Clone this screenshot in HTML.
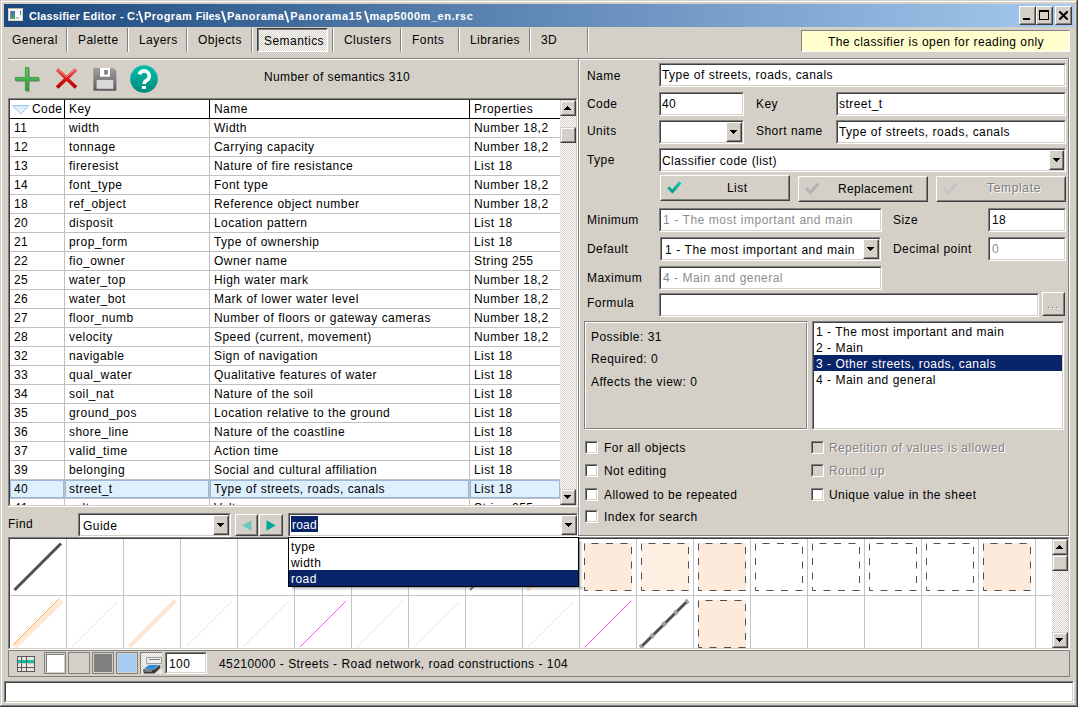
<!DOCTYPE html><html><head><meta charset="utf-8"><style>
html,body{margin:0;padding:0;}
body{width:1078px;height:707px;position:relative;overflow:hidden;background:#d4d0c8;font-family:"Liberation Sans",sans-serif;font-size:12px;}
div{position:absolute;box-sizing:border-box;}
.t{white-space:pre;line-height:14px;font-size:12px;word-spacing:0.2px;}
.ed{border:1px solid;border-color:#808080 #fff #fff #808080;}
.ed::before{content:"";position:absolute;left:0;top:0;right:0;bottom:0;border:1px solid;border-color:#404040 #d4d0c8 #d4d0c8 #404040;}
.bt{border:1px solid;border-color:#fff #404040 #404040 #fff;background:#d4d0c8;}
.bt::before{content:"";position:absolute;left:0;top:0;right:0;bottom:0;border:1px solid;border-color:#d4d0c8 #808080 #808080 #d4d0c8;}
.sb{border:1px solid;border-color:#d4d0c8 #404040 #404040 #d4d0c8;background:#d4d0c8;}
.sb::before{content:"";position:absolute;left:0;top:0;right:0;bottom:0;border:1px solid;border-color:#fff #808080 #808080 #fff;}
.cb{border:1px solid;border-color:#fff #404040 #404040 #fff;background:#d4d0c8;}
.cb::before{content:"";position:absolute;left:0;top:0;right:0;bottom:0;border:1px solid;border-color:#d4d0c8 #808080 #808080 #d4d0c8;}
.et{border:1px solid;border-color:#808080 #fff #fff #808080;}
.et::before{content:"";position:absolute;left:0;top:0;right:0;bottom:0;border:1px solid;border-color:#fff #808080 #808080 #fff;}
.dith{background-color:#d4d0c8;background-image:conic-gradient(#fff 25%,transparent 0 50%,#fff 0 75%,transparent 0);background-size:2px 2px;}
</style></head><body>
<div style="position:absolute;left:0px;top:0px;width:1078px;height:1px;background:#d4d0c8"></div>
<div style="position:absolute;left:0px;top:0px;width:1px;height:707px;background:#d4d0c8"></div>
<div style="position:absolute;left:1px;top:1px;width:1076px;height:1px;background:#fff"></div>
<div style="position:absolute;left:1px;top:1px;width:1px;height:705px;background:#fff"></div>
<div style="position:absolute;left:1077px;top:0px;width:1px;height:707px;background:#404040"></div>
<div style="position:absolute;left:0px;top:706px;width:1078px;height:1px;background:#404040"></div>
<div style="position:absolute;left:1076px;top:1px;width:1px;height:705px;background:#808080"></div>
<div style="position:absolute;left:1px;top:705px;width:1076px;height:1px;background:#808080"></div>
<div style="position:absolute;left:4px;top:4px;width:1070px;height:23px;background:linear-gradient(to right,#1c487d,#a6caf0)"></div>
<div style="position:absolute;left:8px;top:8px;width:15px;height:13px;background:#fafafa;border:1px solid #d8d4cc;border-top-color:#b8b4ac"></div>
<div style="position:absolute;left:10px;top:11px;width:5px;height:8px;background:linear-gradient(#3f6fb0,#45b050);border-left:1px solid #8080c0"></div>
<div style="position:absolute;left:20px;top:11px;width:1px;height:2px;background:#3060c0"></div>
<div style="position:absolute;left:20px;top:13px;width:1px;height:2px;background:#40b040"></div>
<div style="position:absolute;left:16px;top:17px;width:3px;height:2px;background:#c4c4c4"></div>
<div class="t" style="left:29px;top:9px;color:#fff;letter-spacing:0.144px;font-size:11px;font-weight:bold;">Classifier</div>
<div class="t" style="left:83px;top:9px;color:#fff;letter-spacing:0.253px;font-size:11px;font-weight:bold;">Editor</div>
<div class="t" style="left:120px;top:9px;color:#fff;letter-spacing:0.200px;font-size:11px;font-weight:bold;">-</div>
<div class="t" style="left:127px;top:9px;color:#fff;letter-spacing:0.200px;font-size:11px;font-weight:bold;">C:</div>
<div class="t" style="left:144px;top:9px;color:#fff;letter-spacing:0.436px;font-size:11px;font-weight:bold;">Program</div>
<div class="t" style="left:195.7px;top:9px;color:#fff;letter-spacing:-0.019px;font-size:11px;font-weight:bold;">Files</div>
<div class="t" style="left:227px;top:9px;color:#fff;letter-spacing:0.510px;font-size:11px;font-weight:bold;">Panorama</div>
<div class="t" style="left:290.3px;top:9px;color:#fff;letter-spacing:0.653px;font-size:11px;font-weight:bold;">Panorama15</div>
<div class="t" style="left:369.5px;top:9px;color:#fff;letter-spacing:0.569px;font-size:11px;font-weight:bold;">map5000m_en.rsc</div>
<svg style="position:absolute;left:137.4px;top:10px" width="8" height="14" viewBox="0 0 8 14"><path d="M1.9 1L5.5 12.5" stroke="#fff" stroke-width="1.9"/></svg>
<svg style="position:absolute;left:219.8px;top:10px" width="8" height="14" viewBox="0 0 8 14"><path d="M1.9 1L5.5 12.5" stroke="#fff" stroke-width="1.9"/></svg>
<svg style="position:absolute;left:283.0px;top:10px" width="8" height="14" viewBox="0 0 8 14"><path d="M1.9 1L5.5 12.5" stroke="#fff" stroke-width="1.9"/></svg>
<svg style="position:absolute;left:363.0px;top:10px" width="8" height="14" viewBox="0 0 8 14"><path d="M1.9 1L5.5 12.5" stroke="#fff" stroke-width="1.9"/></svg>
<div class="cb" style="left:1019px;top:6px;width:17px;height:19px"></div>
<div class="cb" style="left:1036px;top:6px;width:17px;height:19px"></div>
<div class="cb" style="left:1055px;top:6px;width:17px;height:19px"></div>
<div style="position:absolute;left:1023px;top:18px;width:7px;height:2px;background:#000"></div>
<div style="position:absolute;left:1039px;top:10px;width:10px;height:10px;border:1px solid #000;border-top-width:2px"></div>
<svg style="position:absolute;left:1059px;top:11px" width="9" height="9" viewBox="0 0 9 9"><path d="M0.3 0.3L8.7 8.7M8.7 0.3L0.3 8.7" stroke="#000" stroke-width="2"/></svg>
<div style="position:absolute;left:66px;top:28px;width:1px;height:24px;background:#808080"></div>
<div style="position:absolute;left:67px;top:28px;width:1px;height:24px;background:#fff"></div>
<div style="position:absolute;left:127px;top:28px;width:1px;height:24px;background:#808080"></div>
<div style="position:absolute;left:128px;top:28px;width:1px;height:24px;background:#fff"></div>
<div style="position:absolute;left:186px;top:28px;width:1px;height:24px;background:#808080"></div>
<div style="position:absolute;left:187px;top:28px;width:1px;height:24px;background:#fff"></div>
<div style="position:absolute;left:251px;top:28px;width:1px;height:24px;background:#808080"></div>
<div style="position:absolute;left:252px;top:28px;width:1px;height:24px;background:#fff"></div>
<div style="position:absolute;left:332px;top:28px;width:1px;height:24px;background:#808080"></div>
<div style="position:absolute;left:333px;top:28px;width:1px;height:24px;background:#fff"></div>
<div style="position:absolute;left:400px;top:28px;width:1px;height:24px;background:#808080"></div>
<div style="position:absolute;left:401px;top:28px;width:1px;height:24px;background:#fff"></div>
<div style="position:absolute;left:458px;top:28px;width:1px;height:24px;background:#808080"></div>
<div style="position:absolute;left:459px;top:28px;width:1px;height:24px;background:#fff"></div>
<div style="position:absolute;left:529px;top:28px;width:1px;height:24px;background:#808080"></div>
<div style="position:absolute;left:530px;top:28px;width:1px;height:24px;background:#fff"></div>
<div style="position:absolute;left:587px;top:28px;width:1px;height:24px;background:#808080"></div>
<div style="position:absolute;left:588px;top:28px;width:1px;height:24px;background:#fff"></div>
<div class="dith" style="left:257px;top:28px;width:71px;height:24px;border:1px solid;border-color:#404040 #fff #fff #404040"><div style="left:0;top:0;right:0;bottom:0;border:1px solid;border-color:#808080 transparent transparent #808080"></div></div>
<div class="t" style="left:12px;top:33px;color:#000;letter-spacing:0.450px;">General</div>
<div class="t" style="left:78px;top:33px;color:#000;letter-spacing:0.450px;">Palette</div>
<div class="t" style="left:139px;top:33px;color:#000;letter-spacing:0.450px;">Layers</div>
<div class="t" style="left:198px;top:33px;color:#000;letter-spacing:0.450px;">Objects</div>
<div class="t" style="left:264px;top:34px;color:#000;letter-spacing:0.450px;">Semantics</div>
<div class="t" style="left:344px;top:33px;color:#000;letter-spacing:0.450px;">Clusters</div>
<div class="t" style="left:412px;top:33px;color:#000;letter-spacing:0.450px;">Fonts</div>
<div class="t" style="left:470px;top:33px;color:#000;letter-spacing:0.450px;">Libraries</div>
<div class="t" style="left:541px;top:33px;color:#000;letter-spacing:0.450px;">3D</div>
<div style="position:absolute;left:801px;top:30px;width:269px;height:22px;background:#fffecc;border:1px solid;border-color:#808080 #fff #fff #808080"></div>
<div class="t" style="left:828px;top:35px;color:#000;letter-spacing:0.412px;">The classifier is open for reading only</div>
<div style="position:absolute;left:8px;top:58px;width:1062px;height:1px;background:#808080"></div>
<div style="position:absolute;left:9px;top:59px;width:1061px;height:1px;background:#fff"></div>
<div style="position:absolute;left:578px;top:58px;width:1px;height:479px;background:#808080"></div>
<div style="position:absolute;left:579px;top:59px;width:1px;height:477px;background:#fff"></div>
<div style="position:absolute;left:1068px;top:58px;width:1px;height:478px;background:#808080"></div>
<div style="position:absolute;left:1069px;top:58px;width:1px;height:479px;background:#fff"></div>
<div style="position:absolute;left:578px;top:535px;width:491px;height:1px;background:#808080"></div>
<div style="position:absolute;left:578px;top:536px;width:492px;height:1px;background:#fff"></div>
<svg style="position:absolute;left:12px;top:64px" width="30" height="30" viewBox="0 0 30 30">
<defs><linearGradient id="gp" x1="0" y1="0" x2="0" y2="1"><stop offset="0" stop-color="#5cc865"/><stop offset="1" stop-color="#2e9a3a"/></linearGradient></defs>
<path d="M14 4h4v10h10v4h-10v10h-4v-10h-10v-4h10z" fill="#000" opacity="0.2"/>
<path d="M13.4 3.4h3.2v10h10v3.2h-10v10h-3.2v-10h-10v-3.2h10z" fill="url(#gp)" stroke="#2c9636" stroke-width="0.8"/>
</svg>
<svg style="position:absolute;left:54px;top:66px" width="26" height="26" viewBox="0 0 26 26">
<defs><linearGradient id="gx" x1="0" y1="0" x2="0" y2="1"><stop offset="0" stop-color="#ec5a5a"/><stop offset="0.5" stop-color="#e01a1a"/><stop offset="1" stop-color="#b80000"/></linearGradient></defs>
<path d="M3.1 3.3L22 21.5M22 3.3L3.1 21.5" stroke="url(#gx)" stroke-width="3.7" stroke-linecap="butt"/>
<path d="M3.6 2.6L12.6 11.3M21.5 2.6L12.5 11.3" stroke="#f69a9a" stroke-width="1" opacity="0.8"/>
</svg>
<svg style="position:absolute;left:93px;top:68px" width="24" height="24" viewBox="0 0 24 24">
<defs><linearGradient id="gs" x1="0" y1="0" x2="0" y2="1"><stop offset="0" stop-color="#9e9e9e"/><stop offset="1" stop-color="#5c5c5c"/></linearGradient></defs>
<path d="M0.4 0h20l3 3v19.7h-23z" fill="url(#gs)"/>
<rect x="7" y="0" width="10" height="8.7" fill="#fff"/>
<rect x="11.2" y="2" width="3.6" height="4.6" fill="#7e7e7e"/>
<rect x="3.6" y="11.9" width="16.7" height="8.9" fill="#d9d9d9"/>
</svg>
<svg style="position:absolute;left:130px;top:65px" width="28" height="28" viewBox="0 0 28 28">
<defs><linearGradient id="gh" x1="0" y1="0" x2="0" y2="1"><stop offset="0" stop-color="#00c0ac"/><stop offset="1" stop-color="#00897e"/></linearGradient></defs>
<circle cx="14" cy="14" r="13.8" fill="url(#gh)"/>
<path d="M9.26 9.32A5.2 5.2 0 1 1 18.41 14.08Q14.15 16.2 14.15 19" fill="none" stroke="#fff" stroke-width="3.6"/>
<rect x="11.9" y="21" width="4.1" height="2.9" fill="#fff"/>
</svg>
<div class="t" style="left:264px;top:70px;color:#000;letter-spacing:0.378px;">Number of semantics 310</div>
<div style="position:absolute;left:8px;top:98px;width:570px;height:1px;background:#808080"></div>
<div style="position:absolute;left:8px;top:98px;width:1px;height:409px;background:#808080"></div>
<div style="position:absolute;left:9px;top:99px;width:568px;height:1px;background:#404040"></div>
<div style="position:absolute;left:9px;top:99px;width:1px;height:407px;background:#404040"></div>
<div style="position:absolute;left:8px;top:506px;width:570px;height:1px;background:#fff"></div>
<div style="position:absolute;left:577px;top:98px;width:1px;height:409px;background:#fff"></div>
<div style="position:absolute;left:9px;top:505px;width:568px;height:1px;background:#d4d0c8"></div>
<div style="position:absolute;left:576px;top:99px;width:1px;height:407px;background:#d4d0c8"></div>
<div style="left:10px;top:100px;width:550px;height:405px;background:#fff;overflow:hidden">
<div style="position:absolute;left:0px;top:18px;width:550px;height:1px;background:#000"></div>
<div style="position:absolute;left:54px;top:0px;width:1px;height:18px;background:#000"></div>
<div style="position:absolute;left:199px;top:0px;width:1px;height:18px;background:#000"></div>
<div style="position:absolute;left:459px;top:0px;width:1px;height:18px;background:#000"></div>
<svg style="position:absolute;left:2px;top:5px" width="18" height="10" viewBox="0 0 18 10"><defs><linearGradient id="gt" x1="0" y1="0" x2="0" y2="1"><stop offset="0" stop-color="#d6e8fa"/><stop offset="1" stop-color="#f2f8ff"/></linearGradient></defs><path d="M0.5 0.5H17L8.75 9.3z" fill="url(#gt)" stroke="#9cc4ec" stroke-width="1"/></svg>
<div class="t" style="left:22px;top:2px;color:#000;letter-spacing:0.450px;">Code</div>
<div class="t" style="left:59px;top:2px;color:#000;letter-spacing:0.450px;">Key</div>
<div class="t" style="left:204px;top:2px;color:#000;letter-spacing:0.450px;">Name</div>
<div class="t" style="left:464px;top:2px;color:#000;letter-spacing:0.450px;">Properties</div>
<div style="position:absolute;left:0px;top:37px;width:550px;height:1px;background:#c0c0c0"></div>
<div style="position:absolute;left:54px;top:19px;width:1px;height:18px;background:#c0c0c0"></div>
<div style="position:absolute;left:199px;top:19px;width:1px;height:18px;background:#c0c0c0"></div>
<div style="position:absolute;left:459px;top:19px;width:1px;height:18px;background:#c0c0c0"></div>
<div class="t" style="left:4px;top:21px;color:#000;letter-spacing:0.450px;">11</div>
<div class="t" style="left:59px;top:21px;color:#000;letter-spacing:0.450px;">width</div>
<div class="t" style="left:204px;top:21px;color:#000;letter-spacing:0.450px;">Width</div>
<div class="t" style="left:464px;top:21px;color:#000;letter-spacing:0.450px;">Number 18,2</div>
<div style="position:absolute;left:0px;top:56px;width:550px;height:1px;background:#c0c0c0"></div>
<div style="position:absolute;left:54px;top:38px;width:1px;height:18px;background:#c0c0c0"></div>
<div style="position:absolute;left:199px;top:38px;width:1px;height:18px;background:#c0c0c0"></div>
<div style="position:absolute;left:459px;top:38px;width:1px;height:18px;background:#c0c0c0"></div>
<div class="t" style="left:4px;top:40px;color:#000;letter-spacing:0.450px;">12</div>
<div class="t" style="left:59px;top:40px;color:#000;letter-spacing:0.450px;">tonnage</div>
<div class="t" style="left:204px;top:40px;color:#000;letter-spacing:0.450px;">Carrying capacity</div>
<div class="t" style="left:464px;top:40px;color:#000;letter-spacing:0.450px;">Number 18,2</div>
<div style="position:absolute;left:0px;top:75px;width:550px;height:1px;background:#c0c0c0"></div>
<div style="position:absolute;left:54px;top:57px;width:1px;height:18px;background:#c0c0c0"></div>
<div style="position:absolute;left:199px;top:57px;width:1px;height:18px;background:#c0c0c0"></div>
<div style="position:absolute;left:459px;top:57px;width:1px;height:18px;background:#c0c0c0"></div>
<div class="t" style="left:4px;top:59px;color:#000;letter-spacing:0.450px;">13</div>
<div class="t" style="left:59px;top:59px;color:#000;letter-spacing:0.450px;">fireresist</div>
<div class="t" style="left:204px;top:59px;color:#000;letter-spacing:0.450px;">Nature of fire resistance</div>
<div class="t" style="left:464px;top:59px;color:#000;letter-spacing:0.450px;">List 18</div>
<div style="position:absolute;left:0px;top:94px;width:550px;height:1px;background:#c0c0c0"></div>
<div style="position:absolute;left:54px;top:76px;width:1px;height:18px;background:#c0c0c0"></div>
<div style="position:absolute;left:199px;top:76px;width:1px;height:18px;background:#c0c0c0"></div>
<div style="position:absolute;left:459px;top:76px;width:1px;height:18px;background:#c0c0c0"></div>
<div class="t" style="left:4px;top:78px;color:#000;letter-spacing:0.450px;">14</div>
<div class="t" style="left:59px;top:78px;color:#000;letter-spacing:0.450px;">font_type</div>
<div class="t" style="left:204px;top:78px;color:#000;letter-spacing:0.450px;">Font type</div>
<div class="t" style="left:464px;top:78px;color:#000;letter-spacing:0.450px;">Number 18,2</div>
<div style="position:absolute;left:0px;top:113px;width:550px;height:1px;background:#c0c0c0"></div>
<div style="position:absolute;left:54px;top:95px;width:1px;height:18px;background:#c0c0c0"></div>
<div style="position:absolute;left:199px;top:95px;width:1px;height:18px;background:#c0c0c0"></div>
<div style="position:absolute;left:459px;top:95px;width:1px;height:18px;background:#c0c0c0"></div>
<div class="t" style="left:4px;top:97px;color:#000;letter-spacing:0.450px;">18</div>
<div class="t" style="left:59px;top:97px;color:#000;letter-spacing:0.450px;">ref_object</div>
<div class="t" style="left:204px;top:97px;color:#000;letter-spacing:0.450px;">Reference object number</div>
<div class="t" style="left:464px;top:97px;color:#000;letter-spacing:0.450px;">Number 18,2</div>
<div style="position:absolute;left:0px;top:132px;width:550px;height:1px;background:#c0c0c0"></div>
<div style="position:absolute;left:54px;top:114px;width:1px;height:18px;background:#c0c0c0"></div>
<div style="position:absolute;left:199px;top:114px;width:1px;height:18px;background:#c0c0c0"></div>
<div style="position:absolute;left:459px;top:114px;width:1px;height:18px;background:#c0c0c0"></div>
<div class="t" style="left:4px;top:116px;color:#000;letter-spacing:0.450px;">20</div>
<div class="t" style="left:59px;top:116px;color:#000;letter-spacing:0.450px;">disposit</div>
<div class="t" style="left:204px;top:116px;color:#000;letter-spacing:0.450px;">Location pattern</div>
<div class="t" style="left:464px;top:116px;color:#000;letter-spacing:0.450px;">List 18</div>
<div style="position:absolute;left:0px;top:151px;width:550px;height:1px;background:#c0c0c0"></div>
<div style="position:absolute;left:54px;top:133px;width:1px;height:18px;background:#c0c0c0"></div>
<div style="position:absolute;left:199px;top:133px;width:1px;height:18px;background:#c0c0c0"></div>
<div style="position:absolute;left:459px;top:133px;width:1px;height:18px;background:#c0c0c0"></div>
<div class="t" style="left:4px;top:135px;color:#000;letter-spacing:0.450px;">21</div>
<div class="t" style="left:59px;top:135px;color:#000;letter-spacing:0.450px;">prop_form</div>
<div class="t" style="left:204px;top:135px;color:#000;letter-spacing:0.450px;">Type of ownership</div>
<div class="t" style="left:464px;top:135px;color:#000;letter-spacing:0.450px;">List 18</div>
<div style="position:absolute;left:0px;top:170px;width:550px;height:1px;background:#c0c0c0"></div>
<div style="position:absolute;left:54px;top:152px;width:1px;height:18px;background:#c0c0c0"></div>
<div style="position:absolute;left:199px;top:152px;width:1px;height:18px;background:#c0c0c0"></div>
<div style="position:absolute;left:459px;top:152px;width:1px;height:18px;background:#c0c0c0"></div>
<div class="t" style="left:4px;top:154px;color:#000;letter-spacing:0.450px;">22</div>
<div class="t" style="left:59px;top:154px;color:#000;letter-spacing:0.450px;">fio_owner</div>
<div class="t" style="left:204px;top:154px;color:#000;letter-spacing:0.450px;">Owner name</div>
<div class="t" style="left:464px;top:154px;color:#000;letter-spacing:0.450px;">String 255</div>
<div style="position:absolute;left:0px;top:189px;width:550px;height:1px;background:#c0c0c0"></div>
<div style="position:absolute;left:54px;top:171px;width:1px;height:18px;background:#c0c0c0"></div>
<div style="position:absolute;left:199px;top:171px;width:1px;height:18px;background:#c0c0c0"></div>
<div style="position:absolute;left:459px;top:171px;width:1px;height:18px;background:#c0c0c0"></div>
<div class="t" style="left:4px;top:173px;color:#000;letter-spacing:0.450px;">25</div>
<div class="t" style="left:59px;top:173px;color:#000;letter-spacing:0.450px;">water_top</div>
<div class="t" style="left:204px;top:173px;color:#000;letter-spacing:0.450px;">High water mark</div>
<div class="t" style="left:464px;top:173px;color:#000;letter-spacing:0.450px;">Number 18,2</div>
<div style="position:absolute;left:0px;top:208px;width:550px;height:1px;background:#c0c0c0"></div>
<div style="position:absolute;left:54px;top:190px;width:1px;height:18px;background:#c0c0c0"></div>
<div style="position:absolute;left:199px;top:190px;width:1px;height:18px;background:#c0c0c0"></div>
<div style="position:absolute;left:459px;top:190px;width:1px;height:18px;background:#c0c0c0"></div>
<div class="t" style="left:4px;top:192px;color:#000;letter-spacing:0.450px;">26</div>
<div class="t" style="left:59px;top:192px;color:#000;letter-spacing:0.450px;">water_bot</div>
<div class="t" style="left:204px;top:192px;color:#000;letter-spacing:0.450px;">Mark of lower water level</div>
<div class="t" style="left:464px;top:192px;color:#000;letter-spacing:0.450px;">Number 18,2</div>
<div style="position:absolute;left:0px;top:227px;width:550px;height:1px;background:#c0c0c0"></div>
<div style="position:absolute;left:54px;top:209px;width:1px;height:18px;background:#c0c0c0"></div>
<div style="position:absolute;left:199px;top:209px;width:1px;height:18px;background:#c0c0c0"></div>
<div style="position:absolute;left:459px;top:209px;width:1px;height:18px;background:#c0c0c0"></div>
<div class="t" style="left:4px;top:211px;color:#000;letter-spacing:0.450px;">27</div>
<div class="t" style="left:59px;top:211px;color:#000;letter-spacing:0.450px;">floor_numb</div>
<div class="t" style="left:204px;top:211px;color:#000;letter-spacing:0.450px;">Number of floors or gateway cameras</div>
<div class="t" style="left:464px;top:211px;color:#000;letter-spacing:0.450px;">Number 18,2</div>
<div style="position:absolute;left:0px;top:246px;width:550px;height:1px;background:#c0c0c0"></div>
<div style="position:absolute;left:54px;top:228px;width:1px;height:18px;background:#c0c0c0"></div>
<div style="position:absolute;left:199px;top:228px;width:1px;height:18px;background:#c0c0c0"></div>
<div style="position:absolute;left:459px;top:228px;width:1px;height:18px;background:#c0c0c0"></div>
<div class="t" style="left:4px;top:230px;color:#000;letter-spacing:0.450px;">28</div>
<div class="t" style="left:59px;top:230px;color:#000;letter-spacing:0.450px;">velocity</div>
<div class="t" style="left:204px;top:230px;color:#000;letter-spacing:0.450px;">Speed (current, movement)</div>
<div class="t" style="left:464px;top:230px;color:#000;letter-spacing:0.450px;">Number 18,2</div>
<div style="position:absolute;left:0px;top:265px;width:550px;height:1px;background:#c0c0c0"></div>
<div style="position:absolute;left:54px;top:247px;width:1px;height:18px;background:#c0c0c0"></div>
<div style="position:absolute;left:199px;top:247px;width:1px;height:18px;background:#c0c0c0"></div>
<div style="position:absolute;left:459px;top:247px;width:1px;height:18px;background:#c0c0c0"></div>
<div class="t" style="left:4px;top:249px;color:#000;letter-spacing:0.450px;">32</div>
<div class="t" style="left:59px;top:249px;color:#000;letter-spacing:0.450px;">navigable</div>
<div class="t" style="left:204px;top:249px;color:#000;letter-spacing:0.450px;">Sign of navigation</div>
<div class="t" style="left:464px;top:249px;color:#000;letter-spacing:0.450px;">List 18</div>
<div style="position:absolute;left:0px;top:284px;width:550px;height:1px;background:#c0c0c0"></div>
<div style="position:absolute;left:54px;top:266px;width:1px;height:18px;background:#c0c0c0"></div>
<div style="position:absolute;left:199px;top:266px;width:1px;height:18px;background:#c0c0c0"></div>
<div style="position:absolute;left:459px;top:266px;width:1px;height:18px;background:#c0c0c0"></div>
<div class="t" style="left:4px;top:268px;color:#000;letter-spacing:0.450px;">33</div>
<div class="t" style="left:59px;top:268px;color:#000;letter-spacing:0.450px;">qual_water</div>
<div class="t" style="left:204px;top:268px;color:#000;letter-spacing:0.450px;">Qualitative features of water</div>
<div class="t" style="left:464px;top:268px;color:#000;letter-spacing:0.450px;">List 18</div>
<div style="position:absolute;left:0px;top:303px;width:550px;height:1px;background:#c0c0c0"></div>
<div style="position:absolute;left:54px;top:285px;width:1px;height:18px;background:#c0c0c0"></div>
<div style="position:absolute;left:199px;top:285px;width:1px;height:18px;background:#c0c0c0"></div>
<div style="position:absolute;left:459px;top:285px;width:1px;height:18px;background:#c0c0c0"></div>
<div class="t" style="left:4px;top:287px;color:#000;letter-spacing:0.450px;">34</div>
<div class="t" style="left:59px;top:287px;color:#000;letter-spacing:0.450px;">soil_nat</div>
<div class="t" style="left:204px;top:287px;color:#000;letter-spacing:0.450px;">Nature of the soil</div>
<div class="t" style="left:464px;top:287px;color:#000;letter-spacing:0.450px;">List 18</div>
<div style="position:absolute;left:0px;top:322px;width:550px;height:1px;background:#c0c0c0"></div>
<div style="position:absolute;left:54px;top:304px;width:1px;height:18px;background:#c0c0c0"></div>
<div style="position:absolute;left:199px;top:304px;width:1px;height:18px;background:#c0c0c0"></div>
<div style="position:absolute;left:459px;top:304px;width:1px;height:18px;background:#c0c0c0"></div>
<div class="t" style="left:4px;top:306px;color:#000;letter-spacing:0.450px;">35</div>
<div class="t" style="left:59px;top:306px;color:#000;letter-spacing:0.450px;">ground_pos</div>
<div class="t" style="left:204px;top:306px;color:#000;letter-spacing:0.450px;">Location relative to the ground</div>
<div class="t" style="left:464px;top:306px;color:#000;letter-spacing:0.450px;">List 18</div>
<div style="position:absolute;left:0px;top:341px;width:550px;height:1px;background:#c0c0c0"></div>
<div style="position:absolute;left:54px;top:323px;width:1px;height:18px;background:#c0c0c0"></div>
<div style="position:absolute;left:199px;top:323px;width:1px;height:18px;background:#c0c0c0"></div>
<div style="position:absolute;left:459px;top:323px;width:1px;height:18px;background:#c0c0c0"></div>
<div class="t" style="left:4px;top:325px;color:#000;letter-spacing:0.450px;">36</div>
<div class="t" style="left:59px;top:325px;color:#000;letter-spacing:0.450px;">shore_line</div>
<div class="t" style="left:204px;top:325px;color:#000;letter-spacing:0.450px;">Nature of the coastline</div>
<div class="t" style="left:464px;top:325px;color:#000;letter-spacing:0.450px;">List 18</div>
<div style="position:absolute;left:0px;top:360px;width:550px;height:1px;background:#c0c0c0"></div>
<div style="position:absolute;left:54px;top:342px;width:1px;height:18px;background:#c0c0c0"></div>
<div style="position:absolute;left:199px;top:342px;width:1px;height:18px;background:#c0c0c0"></div>
<div style="position:absolute;left:459px;top:342px;width:1px;height:18px;background:#c0c0c0"></div>
<div class="t" style="left:4px;top:344px;color:#000;letter-spacing:0.450px;">37</div>
<div class="t" style="left:59px;top:344px;color:#000;letter-spacing:0.450px;">valid_time</div>
<div class="t" style="left:204px;top:344px;color:#000;letter-spacing:0.450px;">Action time</div>
<div class="t" style="left:464px;top:344px;color:#000;letter-spacing:0.450px;">List 18</div>
<div style="position:absolute;left:0px;top:379px;width:550px;height:1px;background:#c0c0c0"></div>
<div style="position:absolute;left:54px;top:361px;width:1px;height:18px;background:#c0c0c0"></div>
<div style="position:absolute;left:199px;top:361px;width:1px;height:18px;background:#c0c0c0"></div>
<div style="position:absolute;left:459px;top:361px;width:1px;height:18px;background:#c0c0c0"></div>
<div class="t" style="left:4px;top:363px;color:#000;letter-spacing:0.450px;">39</div>
<div class="t" style="left:59px;top:363px;color:#000;letter-spacing:0.450px;">belonging</div>
<div class="t" style="left:204px;top:363px;color:#000;letter-spacing:0.450px;">Social and cultural affiliation</div>
<div class="t" style="left:464px;top:363px;color:#000;letter-spacing:0.450px;">List 18</div>
<div style="position:absolute;left:0px;top:398px;width:550px;height:1px;background:#c0c0c0"></div>
<div style="position:absolute;left:54px;top:380px;width:1px;height:18px;background:#c0c0c0"></div>
<div style="position:absolute;left:199px;top:380px;width:1px;height:18px;background:#c0c0c0"></div>
<div style="position:absolute;left:459px;top:380px;width:1px;height:18px;background:#c0c0c0"></div>
<div style="position:absolute;left:0px;top:380px;width:54px;height:18px;background:#deeffe;border:1px solid #9bb7d9"></div>
<div style="position:absolute;left:55px;top:380px;width:144px;height:18px;background:#deeffe;border:1px solid #9bb7d9"></div>
<div style="position:absolute;left:200px;top:380px;width:259px;height:18px;background:#deeffe;border:1px solid #9bb7d9"></div>
<div style="position:absolute;left:460px;top:380px;width:90px;height:18px;background:#deeffe;border:1px solid #9bb7d9"></div>
<div class="t" style="left:4px;top:382px;color:#000;letter-spacing:0.450px;">40</div>
<div class="t" style="left:59px;top:382px;color:#000;letter-spacing:0.450px;">street_t</div>
<div class="t" style="left:204px;top:382px;color:#000;letter-spacing:0.450px;">Type of streets, roads, canals</div>
<div class="t" style="left:464px;top:382px;color:#000;letter-spacing:0.450px;">List 18</div>
<div style="position:absolute;left:0px;top:417px;width:550px;height:1px;background:#c0c0c0"></div>
<div style="position:absolute;left:54px;top:399px;width:1px;height:18px;background:#c0c0c0"></div>
<div style="position:absolute;left:199px;top:399px;width:1px;height:18px;background:#c0c0c0"></div>
<div style="position:absolute;left:459px;top:399px;width:1px;height:18px;background:#c0c0c0"></div>
<div class="t" style="left:4px;top:401px;color:#000;letter-spacing:0.450px;">41</div>
<div class="t" style="left:59px;top:401px;color:#000;letter-spacing:0.450px;">voltage</div>
<div class="t" style="left:204px;top:401px;color:#000;letter-spacing:0.450px;">Voltage</div>
<div class="t" style="left:464px;top:401px;color:#000;letter-spacing:0.450px;">String 255</div>
</div>
<div class="dith" style="left:560px;top:100px;width:16px;height:405px"></div>
<div class="sb" style="left:560px;top:100px;width:16px;height:16px;"></div>
<div style="position:absolute;left:567px;top:106px;width:1px;height:1px;background:#000"></div>
<div style="position:absolute;left:566px;top:107px;width:3px;height:1px;background:#000"></div>
<div style="position:absolute;left:565px;top:108px;width:5px;height:1px;background:#000"></div>
<div style="position:absolute;left:564px;top:109px;width:7px;height:1px;background:#000"></div>
<div class="sb" style="left:560px;top:127px;width:16px;height:16px;"></div>
<div class="sb" style="left:560px;top:489px;width:16px;height:16px;"></div>
<div style="position:absolute;left:564px;top:495px;width:7px;height:1px;background:#000"></div>
<div style="position:absolute;left:565px;top:496px;width:5px;height:1px;background:#000"></div>
<div style="position:absolute;left:566px;top:497px;width:3px;height:1px;background:#000"></div>
<div style="position:absolute;left:567px;top:498px;width:1px;height:1px;background:#000"></div>
<div class="t" style="left:587px;top:69px;color:#000;letter-spacing:0.450px;">Name</div>
<div class="ed" style="left:659px;top:63px;width:407px;height:24px;background:#fff"></div>
<div class="t" style="left:662px;top:68px;color:#000;letter-spacing:0.450px;">Type of streets, roads, canals</div>
<div class="t" style="left:587px;top:97px;color:#000;letter-spacing:0.450px;">Code</div>
<div class="ed" style="left:659px;top:92px;width:85px;height:24px;background:#fff"></div>
<div class="t" style="left:662px;top:97px;color:#000;letter-spacing:0.450px;">40</div>
<div class="t" style="left:756px;top:97px;color:#000;letter-spacing:0.450px;">Key</div>
<div class="ed" style="left:836px;top:92px;width:230px;height:24px;background:#fff"></div>
<div class="t" style="left:839px;top:97px;color:#000;letter-spacing:0.450px;">street_t</div>
<div class="t" style="left:587px;top:124px;color:#000;letter-spacing:0.450px;">Units</div>
<div class="ed" style="left:659px;top:120px;width:85px;height:24px;background:#fff"></div>
<div class="bt" style="left:726px;top:122px;width:16px;height:20px;"></div>
<div style="position:absolute;left:730px;top:130px;width:7px;height:1px;background:#000"></div>
<div style="position:absolute;left:731px;top:131px;width:5px;height:1px;background:#000"></div>
<div style="position:absolute;left:732px;top:132px;width:3px;height:1px;background:#000"></div>
<div style="position:absolute;left:733px;top:133px;width:1px;height:1px;background:#000"></div>
<div class="t" style="left:756px;top:124px;color:#000;letter-spacing:0.450px;">Short name</div>
<div class="ed" style="left:836px;top:120px;width:230px;height:24px;background:#fff"></div>
<div class="t" style="left:839px;top:125px;color:#000;letter-spacing:0.450px;">Type of streets, roads, canals</div>
<div class="t" style="left:587px;top:153px;color:#000;letter-spacing:0.450px;">Type</div>
<div class="ed" style="left:659px;top:148px;width:407px;height:24px;background:#fff"></div>
<div class="bt" style="left:1049px;top:150px;width:15px;height:20px;"></div>
<div style="position:absolute;left:1053px;top:158px;width:7px;height:1px;background:#000"></div>
<div style="position:absolute;left:1054px;top:159px;width:5px;height:1px;background:#000"></div>
<div style="position:absolute;left:1055px;top:160px;width:3px;height:1px;background:#000"></div>
<div style="position:absolute;left:1056px;top:161px;width:1px;height:1px;background:#000"></div>
<div class="t" style="left:662px;top:154px;color:#000;letter-spacing:0.450px;">Classifier code (list)</div>
<div class="bt" style="left:660px;top:175px;width:130px;height:26px;"></div>
<div class="bt" style="left:798px;top:176px;width:130px;height:26px;"></div>
<div class="bt" style="left:936px;top:176px;width:130px;height:26px;"></div>
<svg style="position:absolute;left:665px;top:180px" width="18" height="16" viewBox="0 0 18 16"><defs><linearGradient id="gc" x1="0" y1="0" x2="0" y2="1"><stop offset="0" stop-color="#02c8b2"/><stop offset="1" stop-color="#0c9e8e"/></linearGradient></defs><path d="M3.2 7.2L7.4 11.6L15.2 2.6" fill="none" stroke="url(#gc)" stroke-width="3"/></svg>
<svg style="position:absolute;left:803px;top:181px" width="18" height="16" viewBox="0 0 18 16"><path d="M3.2 7.2L7.4 11.6L15.2 2.6" fill="none" stroke="#b4b4b4" stroke-width="3"/></svg>
<svg style="position:absolute;left:941px;top:181px" width="18" height="16" viewBox="0 0 18 16"><path d="M3.2 7.2L7.4 11.6L15.2 2.6" fill="none" stroke="#c4c4c4" stroke-width="3"/></svg>
<div class="t" style="left:727px;top:181px;color:#000;letter-spacing:0.450px;">List</div>
<div class="t" style="left:838px;top:182px;color:#000;letter-spacing:0.354px;">Replacement</div>
<div class="t" style="left:988px;top:182px;color:#fff;letter-spacing:0.664px;">Template</div>
<div class="t" style="left:987px;top:181px;color:#808080;letter-spacing:0.664px;">Template</div>
<div class="t" style="left:587px;top:213px;color:#000;letter-spacing:0.450px;">Minimum</div>
<div class="ed" style="left:659px;top:208px;width:223px;height:24px;background:#fff"></div>
<div class="t" style="left:663px;top:213px;color:#8d8d8d;letter-spacing:0.505px;">1 - The most important and main</div>
<div class="t" style="left:893px;top:213px;color:#000;letter-spacing:0.450px;">Size</div>
<div class="ed" style="left:988px;top:208px;width:78px;height:24px;background:#fff"></div>
<div class="t" style="left:992px;top:213px;color:#000;letter-spacing:0.450px;">18</div>
<div class="t" style="left:587px;top:242px;color:#000;letter-spacing:0.450px;">Default</div>
<div class="ed" style="left:660px;top:237px;width:221px;height:24px;background:#fff"></div>
<div class="bt" style="left:863px;top:239px;width:16px;height:20px;"></div>
<div style="position:absolute;left:867px;top:247px;width:7px;height:1px;background:#000"></div>
<div style="position:absolute;left:868px;top:248px;width:5px;height:1px;background:#000"></div>
<div style="position:absolute;left:869px;top:249px;width:3px;height:1px;background:#000"></div>
<div style="position:absolute;left:870px;top:250px;width:1px;height:1px;background:#000"></div>
<div class="t" style="left:665px;top:243px;color:#000;letter-spacing:0.505px;">1 - The most important and main</div>
<div class="t" style="left:893px;top:242px;color:#000;letter-spacing:0.450px;">Decimal point</div>
<div class="ed" style="left:988px;top:237px;width:78px;height:24px;background:#fff"></div>
<div class="t" style="left:992px;top:242px;color:#8d8d8d;letter-spacing:0.450px;">0</div>
<div class="t" style="left:587px;top:271px;color:#000;letter-spacing:0.450px;">Maximum</div>
<div class="ed" style="left:659px;top:266px;width:223px;height:24px;background:#fff"></div>
<div class="t" style="left:663px;top:271px;color:#8d8d8d;letter-spacing:0.450px;">4 - Main and general</div>
<div class="t" style="left:587px;top:296px;color:#000;letter-spacing:0.450px;">Formula</div>
<div class="ed" style="left:659px;top:293px;width:380px;height:24px;background:#fff"></div>
<div class="bt" style="left:1042px;top:292px;width:23px;height:24px;"></div>
<div style="position:absolute;left:1049px;top:308px;width:1px;height:1px;background:#fff"></div>
<div style="position:absolute;left:1048px;top:307px;width:1px;height:1px;background:#808080"></div>
<div style="position:absolute;left:1053px;top:308px;width:1px;height:1px;background:#fff"></div>
<div style="position:absolute;left:1052px;top:307px;width:1px;height:1px;background:#808080"></div>
<div style="position:absolute;left:1057px;top:308px;width:1px;height:1px;background:#fff"></div>
<div style="position:absolute;left:1056px;top:307px;width:1px;height:1px;background:#808080"></div>
<div class="et" style="left:584px;top:321px;width:224px;height:109px"></div>
<div class="t" style="left:591px;top:330px;color:#000;letter-spacing:0.450px;">Possible: 31</div>
<div class="t" style="left:591px;top:352px;color:#000;letter-spacing:0.450px;">Required: 0</div>
<div class="t" style="left:591px;top:375px;color:#000;letter-spacing:0.450px;">Affects the view: 0</div>
<div class="ed" style="left:812px;top:321px;width:252px;height:109px;background:#fff"></div>
<div style="position:absolute;left:814px;top:355px;width:248px;height:16px;background:#0a246a"></div>
<div class="t" style="left:816px;top:325px;color:#000;letter-spacing:0.450px;">1 - The most important and main</div>
<div class="t" style="left:816px;top:341px;color:#000;letter-spacing:0.450px;">2 - Main</div>
<div class="t" style="left:816px;top:357px;color:#fff;letter-spacing:0.450px;">3 - Other streets, roads, canals</div>
<div class="t" style="left:816px;top:373px;color:#000;letter-spacing:0.450px;">4 - Main and general</div>
<div class="ed" style="left:585px;top:441px;width:13px;height:13px;background:#fff"></div>
<div class="t" style="left:604px;top:441px;color:#000;letter-spacing:0.450px;">For all objects</div>
<div class="ed" style="left:585px;top:464px;width:13px;height:13px;background:#fff"></div>
<div class="t" style="left:604px;top:464px;color:#000;letter-spacing:0.450px;">Not editing</div>
<div class="ed" style="left:585px;top:488px;width:13px;height:13px;background:#fff"></div>
<div class="t" style="left:604px;top:488px;color:#000;letter-spacing:0.450px;">Allowed to be repeated</div>
<div class="ed" style="left:585px;top:510px;width:13px;height:13px;background:#fff"></div>
<div class="t" style="left:604px;top:510px;color:#000;letter-spacing:0.450px;">Index for search</div>
<div class="ed" style="left:811px;top:441px;width:13px;height:13px;background:#d4d0c8"></div>
<div class="t" style="left:830px;top:442px;color:#fff;letter-spacing:0.450px;">Repetition of values is allowed</div>
<div class="t" style="left:829px;top:441px;color:#808080;letter-spacing:0.450px;">Repetition of values is allowed</div>
<div class="ed" style="left:811px;top:464px;width:13px;height:13px;background:#d4d0c8"></div>
<div class="t" style="left:830px;top:465px;color:#fff;letter-spacing:0.450px;">Round up</div>
<div class="t" style="left:829px;top:464px;color:#808080;letter-spacing:0.450px;">Round up</div>
<div class="ed" style="left:811px;top:488px;width:13px;height:13px;background:#fff"></div>
<div class="t" style="left:829px;top:488px;color:#000;letter-spacing:0.450px;">Unique value in the sheet</div>
<div class="t" style="left:8px;top:517px;color:#000;letter-spacing:0.450px;">Find</div>
<div class="ed" style="left:78px;top:513px;width:153px;height:24px;background:#fff"></div>
<div class="bt" style="left:213px;top:515px;width:16px;height:20px;"></div>
<div style="position:absolute;left:217px;top:523px;width:7px;height:1px;background:#000"></div>
<div style="position:absolute;left:218px;top:524px;width:5px;height:1px;background:#000"></div>
<div style="position:absolute;left:219px;top:525px;width:3px;height:1px;background:#000"></div>
<div style="position:absolute;left:220px;top:526px;width:1px;height:1px;background:#000"></div>
<div class="t" style="left:83px;top:519px;color:#000;letter-spacing:0.450px;">Guide</div>
<div class="bt" style="left:235px;top:514px;width:23px;height:22px;"></div>
<div class="bt" style="left:259px;top:514px;width:24px;height:22px;"></div>
<svg style="position:absolute;left:242px;top:520px" width="10" height="11" viewBox="0 0 10 11"><path d="M9.5 0.2V10.8L0.3 5.5z" fill="#6cc8be"/></svg>
<svg style="position:absolute;left:266px;top:520px" width="10" height="11" viewBox="0 0 10 11"><path d="M0.5 0.2V10.8L9.7 5.5z" fill="#00a89c"/></svg>
<div class="ed" style="left:288px;top:513px;width:290px;height:24px;background:#fff"></div>
<div class="bt" style="left:561px;top:515px;width:16px;height:20px;"></div>
<div style="position:absolute;left:565px;top:523px;width:7px;height:1px;background:#000"></div>
<div style="position:absolute;left:566px;top:524px;width:5px;height:1px;background:#000"></div>
<div style="position:absolute;left:567px;top:525px;width:3px;height:1px;background:#000"></div>
<div style="position:absolute;left:568px;top:526px;width:1px;height:1px;background:#000"></div>
<div style="position:absolute;left:291px;top:516px;width:27px;height:16px;background:#0a246a"></div>
<div class="t" style="left:292px;top:518px;color:#fff;letter-spacing:0.200px;">road</div>
<div style="position:absolute;left:8px;top:537px;width:1062px;height:1px;background:#808080"></div>
<div style="position:absolute;left:8px;top:537px;width:1px;height:113px;background:#808080"></div>
<div style="position:absolute;left:9px;top:538px;width:1060px;height:1px;background:#404040"></div>
<div style="position:absolute;left:9px;top:538px;width:1px;height:111px;background:#404040"></div>
<div style="position:absolute;left:8px;top:649px;width:1062px;height:1px;background:#fff"></div>
<div style="position:absolute;left:1069px;top:537px;width:1px;height:113px;background:#fff"></div>
<div style="position:absolute;left:9px;top:648px;width:1060px;height:1px;background:#d4d0c8"></div>
<div style="position:absolute;left:1068px;top:538px;width:1px;height:111px;background:#d4d0c8"></div>
<div style="left:10px;top:539px;width:1042px;height:109px;background:#fff;overflow:hidden">
<div style="position:absolute;left:56px;top:0px;width:1px;height:109px;background:#c4c4c4"></div>
<div style="position:absolute;left:113px;top:0px;width:1px;height:109px;background:#c4c4c4"></div>
<div style="position:absolute;left:170px;top:0px;width:1px;height:109px;background:#c4c4c4"></div>
<div style="position:absolute;left:227px;top:0px;width:1px;height:109px;background:#c4c4c4"></div>
<div style="position:absolute;left:284px;top:0px;width:1px;height:109px;background:#c4c4c4"></div>
<div style="position:absolute;left:341px;top:0px;width:1px;height:109px;background:#c4c4c4"></div>
<div style="position:absolute;left:398px;top:0px;width:1px;height:109px;background:#c4c4c4"></div>
<div style="position:absolute;left:455px;top:0px;width:1px;height:109px;background:#c4c4c4"></div>
<div style="position:absolute;left:512px;top:0px;width:1px;height:109px;background:#c4c4c4"></div>
<div style="position:absolute;left:569px;top:0px;width:1px;height:109px;background:#c4c4c4"></div>
<div style="position:absolute;left:626px;top:0px;width:1px;height:109px;background:#c4c4c4"></div>
<div style="position:absolute;left:683px;top:0px;width:1px;height:109px;background:#c4c4c4"></div>
<div style="position:absolute;left:740px;top:0px;width:1px;height:109px;background:#c4c4c4"></div>
<div style="position:absolute;left:797px;top:0px;width:1px;height:109px;background:#c4c4c4"></div>
<div style="position:absolute;left:854px;top:0px;width:1px;height:109px;background:#c4c4c4"></div>
<div style="position:absolute;left:911px;top:0px;width:1px;height:109px;background:#c4c4c4"></div>
<div style="position:absolute;left:968px;top:0px;width:1px;height:109px;background:#c4c4c4"></div>
<div style="position:absolute;left:1025px;top:0px;width:1px;height:109px;background:#c4c4c4"></div>
<div style="position:absolute;left:0px;top:56px;width:1042px;height:1px;background:#c4c4c4"></div>
<svg style="position:absolute;left:0px;top:0px" width="56" height="56" viewBox="0 0 56 56"><path d="M4.5 51L51 4.5" stroke="#505050" stroke-width="3"/></svg>
<svg style="position:absolute;left:456px;top:0px" width="56" height="56" viewBox="0 0 56 56"><path d="M4 51L50 6" stroke="#1f5f7a" stroke-width="1.5"/></svg>
<svg style="position:absolute;left:513px;top:0px" width="56" height="56" viewBox="0 0 56 56"><path d="M4 51L50 6" stroke="#fde5d0" stroke-width="4"/></svg>
<div style="position:absolute;left:574px;top:4px;width:48px;height:48px;background:#fdeada;"></div>
<svg style="position:absolute;left:574px;top:4px" width="48" height="48" viewBox="0 0 48 48"><path d="M0.5 0.5H47.5V47.5H0.5Z" fill="none" stroke="#505050" stroke-width="1" stroke-dasharray="7 7.5" stroke-dashoffset="7.5"/></svg>
<div style="position:absolute;left:631px;top:4px;width:48px;height:48px;background:#fff;background-image:repeating-linear-gradient(135deg,#fde6d2 0 1.06px,#fff 1.06px 2.12px);"></div>
<svg style="position:absolute;left:631px;top:4px" width="48" height="48" viewBox="0 0 48 48"><path d="M0.5 0.5H47.5V47.5H0.5Z" fill="none" stroke="#505050" stroke-width="1" stroke-dasharray="7 7.5" stroke-dashoffset="7.5"/></svg>
<div style="position:absolute;left:688px;top:4px;width:48px;height:48px;background:#fdeada;"></div>
<svg style="position:absolute;left:688px;top:4px" width="48" height="48" viewBox="0 0 48 48"><path d="M0.5 0.5H47.5V47.5H0.5Z" fill="none" stroke="#505050" stroke-width="1" stroke-dasharray="7 7.5" stroke-dashoffset="7.5"/></svg>
<div style="position:absolute;left:745px;top:4px;width:48px;height:48px;background:#fff;"></div>
<svg style="position:absolute;left:745px;top:4px" width="48" height="48" viewBox="0 0 48 48"><path d="M0.5 0.5H47.5V47.5H0.5Z" fill="none" stroke="#505050" stroke-width="1" stroke-dasharray="7 7.5" stroke-dashoffset="7.5"/></svg>
<div style="position:absolute;left:802px;top:4px;width:48px;height:48px;background:#fff;"></div>
<svg style="position:absolute;left:802px;top:4px" width="48" height="48" viewBox="0 0 48 48"><path d="M0.5 0.5H47.5V47.5H0.5Z" fill="none" stroke="#505050" stroke-width="1" stroke-dasharray="7 7.5" stroke-dashoffset="7.5"/></svg>
<div style="position:absolute;left:859px;top:4px;width:48px;height:48px;background:#fff;"></div>
<svg style="position:absolute;left:859px;top:4px" width="48" height="48" viewBox="0 0 48 48"><path d="M0.5 0.5H47.5V47.5H0.5Z" fill="none" stroke="#505050" stroke-width="1" stroke-dasharray="7 7.5" stroke-dashoffset="7.5"/></svg>
<div style="position:absolute;left:916px;top:4px;width:48px;height:48px;background:#fff;"></div>
<svg style="position:absolute;left:916px;top:4px" width="48" height="48" viewBox="0 0 48 48"><path d="M0.5 0.5H47.5V47.5H0.5Z" fill="none" stroke="#505050" stroke-width="1" stroke-dasharray="7 7.5" stroke-dashoffset="7.5"/></svg>
<div style="position:absolute;left:973px;top:4px;width:48px;height:48px;background:#fdeada;"></div>
<svg style="position:absolute;left:973px;top:4px" width="48" height="48" viewBox="0 0 48 48"><path d="M0.5 0.5H47.5V47.5H0.5Z" fill="none" stroke="#505050" stroke-width="1" stroke-dasharray="7 7.5" stroke-dashoffset="7.5"/></svg>
<svg style="position:absolute;left:0px;top:57px" width="56" height="56" viewBox="0 0 56 56"><path d="M5.2 50.8L52 5" stroke="#fde6d2" stroke-width="4.2"/><path d="M2.5 49.5L48.5 3.5" stroke="#ff9a30" stroke-width="1" shape-rendering="crispEdges"/></svg>
<svg style="position:absolute;left:57px;top:57px" width="56" height="56" viewBox="0 0 56 56"><path d="M4.5 51.5L50.5 5.5" stroke="#fde0c4" stroke-width="1" fill="none" shape-rendering="crispEdges"/></svg>
<svg style="position:absolute;left:171px;top:57px" width="56" height="56" viewBox="0 0 56 56"><path d="M4.5 51.5L50.5 5.5" stroke="#fde0c4" stroke-width="1" fill="none" shape-rendering="crispEdges"/></svg>
<svg style="position:absolute;left:228px;top:57px" width="56" height="56" viewBox="0 0 56 56"><path d="M4.5 51.5L50.5 5.5" stroke="#fde0c4" stroke-width="1" fill="none" shape-rendering="crispEdges"/></svg>
<svg style="position:absolute;left:342px;top:57px" width="56" height="56" viewBox="0 0 56 56"><path d="M4.5 51.5L50.5 5.5" stroke="#fde0c4" stroke-width="1" fill="none" shape-rendering="crispEdges"/></svg>
<svg style="position:absolute;left:399px;top:57px" width="56" height="56" viewBox="0 0 56 56"><path d="M4.5 51.5L50.5 5.5" stroke="#fde0c4" stroke-width="1" fill="none" shape-rendering="crispEdges"/></svg>
<svg style="position:absolute;left:513px;top:57px" width="56" height="56" viewBox="0 0 56 56"><path d="M4.5 51.5L50.5 5.5" stroke="#fde0c4" stroke-width="1" fill="none" shape-rendering="crispEdges"/></svg>
<svg style="position:absolute;left:114px;top:57px" width="56" height="56" viewBox="0 0 56 56"><path d="M5.5 50.5L51.2 4.8" stroke="#fde6d2" stroke-width="4.3" fill="none"/></svg>
<svg style="position:absolute;left:285px;top:57px" width="56" height="56" viewBox="0 0 56 56"><path d="M4.5 51.5L50.5 5.5" stroke="#ff50ff" stroke-width="1" fill="none" shape-rendering="crispEdges"/></svg>
<svg style="position:absolute;left:570px;top:57px" width="56" height="56" viewBox="0 0 56 56"><path d="M4.5 51.5L50.5 5.5" stroke="#ff50ff" stroke-width="1" fill="none" shape-rendering="crispEdges"/></svg>
<svg style="position:absolute;left:627px;top:57px" width="56" height="56" viewBox="0 0 56 56"><path d="M3.5 51.5L51 4.5" stroke="#505050" stroke-width="3"/><path d="M3.5 51.5L51 4.5" stroke="#a4a4a4" stroke-width="4.6" stroke-dasharray="4 12.4" stroke-dashoffset="1.5"/></svg>
<div style="position:absolute;left:688px;top:61px;width:48px;height:48px;background:#fdeada;"></div>
<svg style="position:absolute;left:688px;top:61px" width="48" height="48" viewBox="0 0 48 48"><path d="M0.5 0.5H47.5V47.5H0.5Z" fill="none" stroke="#505050" stroke-width="1" stroke-dasharray="7 7.5" stroke-dashoffset="7.5"/></svg>
</div>
<div class="dith" style="left:1052px;top:539px;width:16px;height:109px"></div>
<div class="sb" style="left:1052px;top:539px;width:16px;height:16px;"></div>
<div style="position:absolute;left:1059px;top:545px;width:1px;height:1px;background:#000"></div>
<div style="position:absolute;left:1058px;top:546px;width:3px;height:1px;background:#000"></div>
<div style="position:absolute;left:1057px;top:547px;width:5px;height:1px;background:#000"></div>
<div style="position:absolute;left:1056px;top:548px;width:7px;height:1px;background:#000"></div>
<div class="sb" style="left:1052px;top:555px;width:16px;height:16px;"></div>
<div class="sb" style="left:1052px;top:632px;width:16px;height:16px;"></div>
<div style="position:absolute;left:1056px;top:638px;width:7px;height:1px;background:#000"></div>
<div style="position:absolute;left:1057px;top:639px;width:5px;height:1px;background:#000"></div>
<div style="position:absolute;left:1058px;top:640px;width:3px;height:1px;background:#000"></div>
<div style="position:absolute;left:1059px;top:641px;width:1px;height:1px;background:#000"></div>
<div style="position:absolute;left:579px;top:541px;width:4px;height:46px;background:linear-gradient(to right,rgba(0,0,0,.34),rgba(0,0,0,.14) 40%,rgba(0,0,0,0))"></div>
<div style="position:absolute;left:292px;top:587px;width:291px;height:4px;background:linear-gradient(to bottom,rgba(0,0,0,.36),rgba(0,0,0,.14) 40%,rgba(0,0,0,0))"></div>
<div style="position:absolute;left:288px;top:537px;width:291px;height:50px;background:#fff;border:1px solid #000"></div>
<div style="position:absolute;left:289px;top:570px;width:289px;height:16px;background:#0a246a"></div>
<div class="t" style="left:291px;top:540px;color:#000;letter-spacing:0.450px;">type</div>
<div class="t" style="left:291px;top:556px;color:#000;letter-spacing:0.450px;">width</div>
<div class="t" style="left:291px;top:572px;color:#fff;letter-spacing:0.450px;">road</div>
<div style="position:absolute;left:8px;top:650px;width:1062px;height:27px;border:1px solid #808080"></div>
<svg style="position:absolute;left:17px;top:656px" width="18" height="16" viewBox="0 0 18 16"><rect x="0.5" y="0.5" width="17" height="15" fill="#ebe7df" stroke="#585858"/><rect x="1" y="4" width="16" height="3.2" fill="#10c4a2"/><path d="M4.5 0.5V15.5M9.5 0.5V15.5M0.5 11.5H17.5" stroke="#585858" stroke-width="1"/><path d="M1 7.5H17" stroke="#c8b8b0" stroke-width="0.6"/></svg>
<div style="position:absolute;left:44px;top:652px;width:22px;height:22px;border:1px solid #808080;background:#d4d0c8"></div>
<div style="position:absolute;left:46px;top:654px;width:18px;height:18px;background:#fff;border-top:1px solid #808080;border-left:1px solid #808080"></div>
<div style="position:absolute;left:68px;top:652px;width:22px;height:22px;border:1px solid #808080;background:#d4d0c8"></div>
<div style="position:absolute;left:70px;top:654px;width:18px;height:18px;background:#d4d0c8;"></div>
<div style="position:absolute;left:92px;top:652px;width:22px;height:22px;border:1px solid #808080;background:#d4d0c8"></div>
<div style="position:absolute;left:94px;top:654px;width:18px;height:18px;background:#808080;"></div>
<div style="position:absolute;left:116px;top:652px;width:22px;height:22px;border:1px solid #808080;background:#d4d0c8"></div>
<div style="position:absolute;left:118px;top:654px;width:18px;height:18px;background:#a6caf0;"></div>
<div class="dith" style="left:140px;top:652px;width:22px;height:22px;border-top:1px solid #808080;border-left:1px solid #808080"></div>
<svg style="position:absolute;left:140px;top:652px" width="24" height="24" viewBox="0 0 24 24"><path d="M6.5 5.5H21.5V11.5H6.5z" fill="#f2f2f2" stroke="#9a9a9a"/><path d="M9 7.5H20" stroke="#7a7a7a" stroke-width="1"/><path d="M7 6V13" stroke="#c0c0c0"/><path d="M3 17L9 12.5H21.5L22.5 14L16 21H3z" fill="#cfcfcf"/><path d="M4 16.5L9.5 13H19.5L14 17.5z" fill="#2e8ddb"/><path d="M4.5 17.5H14L19.5 13.5" stroke="#bfe2f8" stroke-width="1" fill="none"/><path d="M3 17.5H14L20 13V16L14.5 21.5H4z" fill="#3a3a3a"/><path d="M4.5 19H12" stroke="#a8a8a8" stroke-width="1.2"/><path d="M17 19.5L22.5 14" stroke="#9a9a9a" stroke-width="1"/></svg>
<div class="ed" style="left:165px;top:652px;width:42px;height:22px;background:#fff"></div>
<div class="t" style="left:169px;top:657px;color:#000;letter-spacing:0.450px;">100</div>
<div class="t" style="left:219px;top:657px;color:#000;letter-spacing:0.426px;">45210000 - Streets - Road network, road constructions - 104</div>
<div class="ed" style="left:4px;top:681px;width:1070px;height:22px;background:#fff"></div>
</body></html>
